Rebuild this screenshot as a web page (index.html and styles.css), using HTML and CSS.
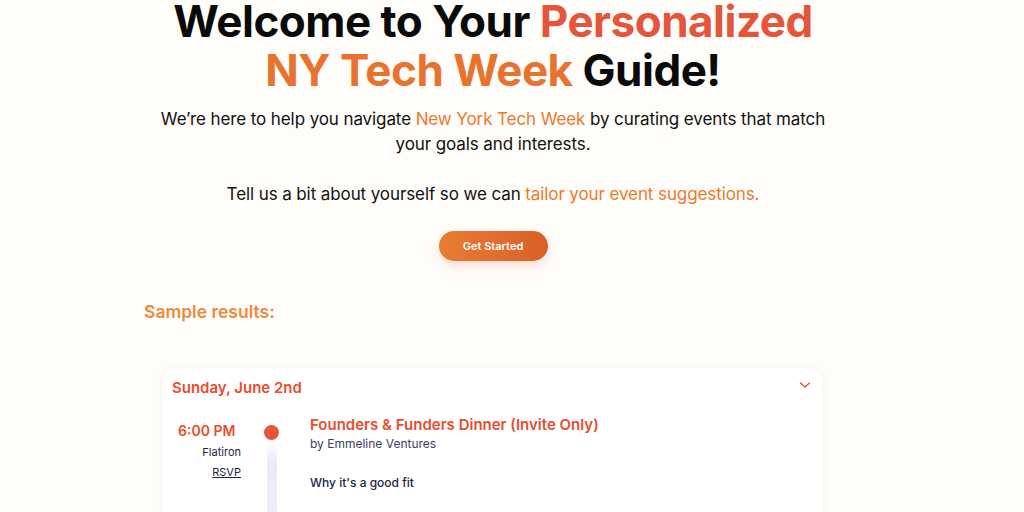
FILE: index.html
```html
<!DOCTYPE html>
<html lang="en">
<head>
  <meta charset="UTF-8" />
  <meta name="viewport" content="width=device-width, initial-scale=1.0"/>
  <title>NY Tech Week Guide</title>
  <link rel="stylesheet" href="styles.css">
</head>
<body>
  <div class="page">
    <h1>Welcome to Your <span class="red">Personalized</span><br><span class="orange">NY Tech Week</span> Guide!</h1>

    <p class="intro">We’re here to help you navigate <span class="accent">New York Tech Week</span> by curating events that match your goals and interests.</p>
    <p class="intro">Tell us a bit about yourself so we can <span class="accent">tailor your event suggestions.</span></p>

    <div class="cta">
      <button>Get Started</button>
    </div>

    <h2>Sample results:</h2>

    <div class="card">
      <div class="card-head">
        <h3>Sunday, June 2nd</h3>
        <svg class="chevron" width="12" height="8" viewBox="0 0 12 8"><path d="M1 1.5 L6 6 L11 1.5" fill="none" stroke="#e8553a" stroke-width="1.4"/></svg>
      </div>

      <div class="event">
        <div class="when">
          <div class="time">6:00 PM</div>
          <div class="place">Flatiron</div>
          <a class="rsvp" href="#">RSVP</a>
        </div>
        <div class="track">
          <div class="dot"></div>
          <div class="line"></div>
        </div>
        <div class="info">
          <div class="title">Founders &amp; Funders Dinner (Invite Only)</div>
          <div class="host">by Emmeline Ventures</div>
          <div class="fit">Why it's a good fit</div>
        </div>
      </div>
    </div>
  </div>
</body>
</html>
```

FILE: styles.css
```css
body {
  margin: 0;
  background: #fffdf9;
  font-family: Inter, "Noto Sans", sans-serif;
  color: #111;
}
.page {
  width: 698px;
  margin-left: 144px;
}
h1 {
  margin: -3px 0 0;
  font-size: 44px;
  line-height: 49px;
  font-weight: 700;
  letter-spacing: -0.5px;
  text-align: center;
  color: #0a0a0a;
}
.red {
  color: #e4553b;
}
.orange {
  color: #e8732f;
}
.intro {
  margin: 12px 0 0;
  font-size: 17px;
  line-height: 25px;
  font-weight: 400;
  letter-spacing: -0.1px;
  text-align: center;
  color: #111;
}
.intro + .intro {
  margin-top: 25px;
}
.accent {
  color: #ea7a2e;
}
.cta {
  display: flex;
  justify-content: center;
  margin-top: 24px;
}
button {
  width: 109px;
  height: 30px;
  border: none;
  border-radius: 15px;
  background: linear-gradient(90deg, #e97c33, #d95f2a);
  color: white;
  font-family: inherit;
  font-size: 11px;
  font-weight: 600;
  box-shadow: 0 5px 10px rgba(200, 90, 40, 0.18);
  cursor: pointer;
}
h2 {
  margin: 40px 0 0;
  font-size: 17.5px;
  line-height: 22px;
  font-weight: 600;
  color: #ee8a3c;
}
.card {
  margin: 45px 20px 0 19px;
  background: white;
  border-radius: 10px;
  box-shadow: 0 1px 6px rgba(0, 0, 0, 0.06);
  padding: 9px 11px 20px 9px;
}
.card-head {
  display: flex;
  justify-content: space-between;
  align-items: flex-start;
}
h3 {
  margin: 0;
  font-size: 15px;
  line-height: 22px;
  font-weight: 600;
  color: #e84d2f;
}
.chevron {
  margin-top: 4px;
}
.event {
  display: flex;
  margin-top: 22px;
}
.when {
  width: 69px;
  text-align: right;
}
.time {
  text-align: left;
  padding-left: 6px;
  font-size: 14px;
  line-height: 20px;
  font-weight: 600;
  color: #e84d2f;
}
.place {
  margin-top: 3px;
  font-size: 11px;
  line-height: 16px;
  color: #1c2444;
}
.rsvp {
  display: inline-block;
  margin-top: 2px;
  font-size: 11px;
  line-height: 16px;
  color: #1c2444;
  text-decoration: underline;
}
.track {
  width: 15px;
  margin-left: 23px;
  display: flex;
  flex-direction: column;
  align-items: center;
}
.dot {
  width: 15px;
  height: 15px;
  border-radius: 50%;
  background: #e8553a;
  margin-top: 4px;
}
.line {
  width: 10px;
  height: 80px;
  margin-top: 5px;
  background: linear-gradient(180deg, #fbfbfe, #e8ebf8 20%, #efeef3);
}
.info {
  margin: -6px 0 0 31px;
}
.title {
  font-size: 15px;
  line-height: 20px;
  font-weight: 600;
  color: #e84d2f;
}
.host {
  font-size: 12px;
  line-height: 16px;
  color: #3a4060;
  margin-top: 1px;
}
.fit {
  margin-top: 23px;
  font-size: 12px;
  line-height: 16px;
  font-weight: 500;
  color: #1c2444;
}
```
